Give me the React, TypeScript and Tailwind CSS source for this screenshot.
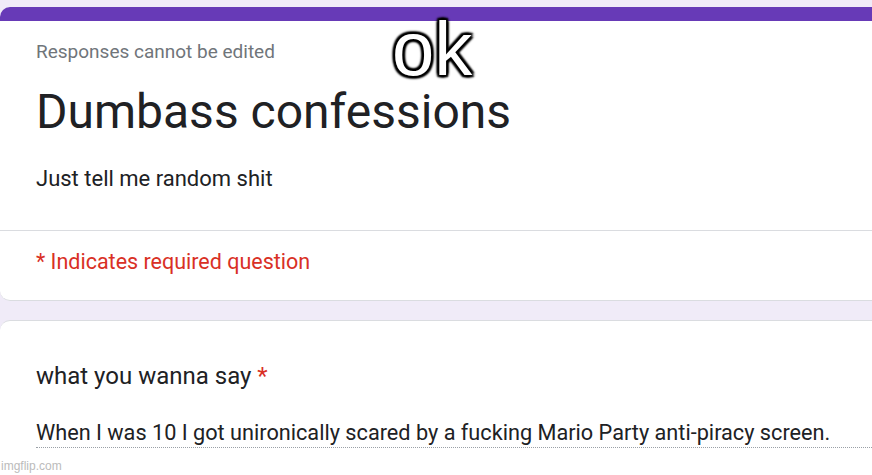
import React from "react";

export default function App() {
  const roboto = { fontFamily: "Roboto, 'Liberation Sans', sans-serif" };
  return (
    <div className="relative w-[872px] h-[475px] overflow-hidden bg-[#f0ebf8]" style={roboto}>
      <div className="pt-[7px]">
        <div className="w-[900px] rounded-l-[10px] overflow-hidden bg-white border-b border-[#dadce0]">
          <div className="h-[14px] bg-[#673ab7]" />
          <div className="pl-[36px] pt-[19px] pb-[37px] border-b border-[#dadce0]">
            <div className="text-[19px] text-[#70757a] leading-[24px]">Responses cannot be edited</div>
            <div className="mt-[20px] text-[48px] leading-[56px] text-[#202124]">Dumbass confessions</div>
            <div className="mt-[25px] text-[22px] leading-[28px] text-[#202124]">Just tell me random shit</div>
          </div>
          <div className="pl-[36px] pt-[17px] h-[69px]">
            <div className="text-[21.5px] leading-[28px] text-[#d93025]">* Indicates required question</div>
          </div>
        </div>
        <div className="mt-[19px] w-[900px] h-[200px] rounded-l-[10px] bg-white border-t border-[#dadce0] pl-[36px] pt-[40px]">
          <div className="text-[24px] leading-[30px] text-[#202124]">
            what you wanna say <span className="text-[#d93025]">*</span>
          </div>
          <div className="mt-[28px] w-[836px] border-b border-dotted border-[#9aa0a6]">
            <div className="text-[21.7px] leading-[28px] text-[#202124] whitespace-nowrap">
              When I was 10 I got unironically scared by a fucking Mario Party anti-piracy screen.
            </div>
          </div>
        </div>
      </div>
      <div
        className="absolute left-[392px] top-[4px] text-[76px] leading-[90px] text-white"
        style={{
          fontFamily: "'Liberation Sans', Arial, sans-serif",
          textShadow:
            "0 0 2px #000, 0 0 3px #000, 2px 2px 2px #000, -2px -2px 2px #000, 2px -2px 2px #000, -2px 2px 2px #000, 0 2px 3px #000, 0 -2px 3px #000, 2px 0 3px #000, -2px 0 3px #000",
        }}
      >
        ok
      </div>
      <div
        className="absolute left-[1px] top-[459px] text-[12px] leading-[14px] text-[#bbbbbb]"
        style={{ fontFamily: "'Liberation Sans', Arial, sans-serif" }}
      >
        imgflip.com
      </div>
    </div>
  );
}
